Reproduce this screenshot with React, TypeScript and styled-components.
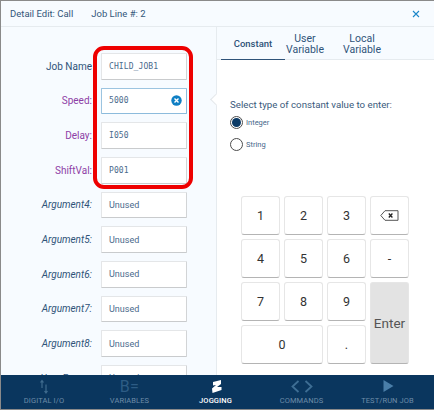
import React from "react";
import styled, { createGlobalStyle } from "styled-components";

const Global = createGlobalStyle`
  html, body { margin: 0; padding: 0; background: #8a8a8a; }
  * { box-sizing: border-box; }
`;

const Window = styled.div`
  width: 434px;
  height: 410px;
  padding: 1px 0 1px 1px;
  display: flex;
  flex-direction: column;
  font-family: Roboto, "Liberation Sans", sans-serif;
  background: #8a8a8a;
  overflow: hidden;
`;
const Header = styled.header`
  height: 26px;
  flex: none;
  display: flex;
  align-items: center;
  padding: 0 9px;
  gap: 18px;
  background: #f7fbff;
  border-bottom: 1px solid #e6ebef;
  font-size: 9.5px;
  color: #33567a;
`;
const HeaderSpacer = styled.div`
  flex: 1;
`;
const Close = styled.svg`
  width: 8px;
  height: 8px;
  margin-right: 5px;
`;
const Main = styled.main`
  flex: 1;
  min-height: 0;
  display: grid;
  grid-template-columns: 216px 1fr;
  overflow: hidden;
`;
const LeftPanel = styled.section`
  position: relative;
  background: #f7fbff;
  padding: 26px 0 0 0;
  overflow: hidden;
  display: flex;
  flex-direction: column;
  gap: 8px;
  border-right: 1px solid #e6ebef;
`;
const Row = styled.div`
  flex: none;
  display: grid;
  grid-template-columns: 91px 86px;
  column-gap: 9px;
  align-items: center;
  height: 26.67px;
`;
const Label = styled.label<{ $kind?: "normal" | "purple" | "arg" }>`
  text-align: right;
  font-size: 10px;
  color: ${(p) => (p.$kind === "purple" ? "#8e3ea6" : "#2f5379")};
  font-style: ${(p) => (p.$kind === "arg" ? "italic" : "normal")};
`;
const Field = styled.div<{ $active?: boolean; $mono?: boolean }>`
  height: 100%;
  background: #fff;
  display: flex;
  align-items: center;
  justify-content: space-between;
  padding: 0 4px 0 7px;
  border: 1px solid ${(p) => (p.$active ? "#9cc4e0" : "#e4e6e8")};
  border-bottom: 1.5px solid ${(p) => (p.$active ? "#8cbbdc" : "#c9cbcd")};
  border-right: 1.5px solid ${(p) => (p.$active ? "#8cbbdc" : "#d2d4d6")};
  border-radius: 1px;
  font-size: ${(p) => (p.$mono ? "8px" : "9px")};
  letter-spacing: ${(p) => (p.$mono ? "0.1px" : "0")};
  font-family: ${(p) =>
    p.$mono ? '"DejaVu Sans Mono", "Liberation Mono", monospace' : "Roboto, sans-serif"};
  color: #4a6a8c;
`;
const ClearIcon = styled.svg`
  width: 11px;
  height: 11px;
  flex: none;
`;
const Highlight = styled.div`
  position: absolute;
  left: 92px;
  top: 19px;
  width: 100px;
  height: 143px;
  border: 4px solid #ee0000;
  border-radius: 11px;
  pointer-events: none;
`;
const RightPanel = styled.section`
  position: relative;
  background: #fff;
  display: flex;
  flex-direction: column;
`;
const Tabs = styled.nav`
  flex: none;
  height: 33px;
  display: flex;
  align-items: stretch;
  padding-left: 4px;
  background: #f7fbff;
  border-bottom: 1px solid #e6ebef;
`;
const Tab = styled.div<{ $active?: boolean; $w: number }>`
  width: ${(p) => p.$w}px;
  display: flex;
  align-items: center;
  justify-content: center;
  text-align: center;
  line-height: 11px;
  font-size: ${(p) => (p.$active ? "9.5px" : "10.5px")};
  font-weight: ${(p) => (p.$active ? 500 : 400)};
  color: #2f5379;
  margin-bottom: -1px;
  border-bottom: ${(p) => (p.$active ? "1px solid #2f5379" : "none")};
`;
const Pointer = styled.div`
  position: absolute;
  left: -5px;
  top: 68px;
  width: 9px;
  height: 9px;
  background: #fff;
  transform: rotate(45deg);
  border-left: 1px solid #e2e6ea;
  border-bottom: 1px solid #e2e6ea;
`;
const Constant = styled.div`
  padding: 39px 0 0 13px;
  flex: 1;
  display: flex;
  flex-direction: column;
`;
const Prompt = styled.div`
  font-size: 9.7px;
  line-height: 11px;
  color: #3a5a7c;
`;
const RadioGroup = styled.div`
  margin-top: 6px;
  display: flex;
  flex-direction: column;
  gap: 9px;
`;
const RadioRow = styled.div`
  display: flex;
  align-items: center;
  gap: 3px;
  height: 13px;
  font-size: 7.5px;
  color: #46678a;
`;
const RadioDot = styled.span<{ $on?: boolean }>`
  width: 13px;
  height: 13px;
  border-radius: 50%;
  border: 1px solid #4c4c4c;
  display: flex;
  align-items: center;
  justify-content: center;
  background: #fff;
  &::after {
    content: "";
    width: 9px;
    height: 9px;
    border-radius: 50%;
    background: ${(p) => (p.$on ? "#0b3a66" : "transparent")};
  }
`;
const Keypad = styled.div`
  margin: 45px 0 0 11px;
  display: grid;
  grid-template-columns: repeat(4, 39px);
  grid-auto-rows: 39px;
  gap: 4px;
`;
const Key = styled.div<{ $wide?: boolean; $tall?: boolean; $enter?: boolean }>`
  grid-column: ${(p) => (p.$wide ? "span 2" : "auto")};
  grid-row: ${(p) => (p.$tall ? "span 2" : "auto")};
  display: flex;
  align-items: center;
  justify-content: center;
  background: ${(p) => (p.$enter ? "#e3e3e3" : "#fff")};
  border: 1px solid #e6e6e6;
  border-bottom: 1.5px solid #b4b4b4;
  border-radius: 3px;
  font-size: ${(p) => (p.$enter ? "13.5px" : "12.5px")};
  color: ${(p) => (p.$enter ? "#555" : "#333")};
`;
const Footer = styled.footer`
  flex: none;
  height: 34px;
  background: #0a365e;
  display: grid;
  grid-template-columns: 86px 85px 87px 85px 87px;
`;
const NavItem = styled.div<{ $active?: boolean }>`
  display: flex;
  flex-direction: column;
  align-items: center;
  justify-content: flex-start;
  padding-top: 4px;
  gap: 2px;
  color: ${(p) => (p.$active ? "#ffffff" : "#6d8ca8")};
  font-size: 7.5px;
  font-weight: ${(p) => (p.$active ? 500 : 400)};
  letter-spacing: 0.1px;
  white-space: nowrap;
`;
const NavIcon = styled.svg<{ $tone?: string }>`
  width: 24px;
  height: 15px;
  display: block;
  flex: none;
  color: ${(p) => p.$tone ?? "inherit"};
`;
const NavGlyph = styled.div`
  height: 15px;
  font-size: 16px;
  line-height: 16px;
  font-weight: 400;
  letter-spacing: 0.5px;
  color: #2d5c85;
`;

const args = ["Argument4:", "Argument5:", "Argument6:", "Argument7:", "Argument8:", "User Frame:"];
const keys = ["1", "2", "3"];

export default function App() {
  return (
    <Window>
      <Global />
      <Header>
        <span>Detail Edit: Call</span>
        <span>Job Line #: 2</span>
        <HeaderSpacer />
        <Close viewBox="0 0 8 8">
          <path d="M1 1l6 6M7 1L1 7" stroke="#1b87c9" strokeWidth="1.1" fill="none" />
        </Close>
      </Header>
      <Main>
        <LeftPanel>
          <Row>
            <Label>Job Name</Label>
            <Field $mono>CHILD_JOB1</Field>
          </Row>
          <Row>
            <Label $kind="purple">Speed:</Label>
            <Field $mono $active>
              5000
              <ClearIcon viewBox="0 0 11 11">
                <circle cx="5.5" cy="5.5" r="5.2" fill="#0f7fc4" />
                <path d="M3.5 3.5l4 4M7.5 3.5l-4 4" stroke="#fff" strokeWidth="1.4" />
              </ClearIcon>
            </Field>
          </Row>
          <Row>
            <Label $kind="purple">Delay:</Label>
            <Field $mono>I050</Field>
          </Row>
          <Row>
            <Label $kind="purple">ShiftVal:</Label>
            <Field $mono>P001</Field>
          </Row>
          {args.map((a) => (
            <Row key={a}>
              <Label $kind="arg">{a}</Label>
              <Field>Unused</Field>
            </Row>
          ))}
          <Highlight />
        </LeftPanel>
        <RightPanel>
          <Tabs>
            <Tab $active $w={64}>Constant</Tab>
            <Tab $w={40}>User<br />Variable</Tab>
            <Tab $w={74}>Local<br />Variable</Tab>
          </Tabs>
          <Pointer />
          <Constant>
            <Prompt>Select type of constant value to enter:</Prompt>
            <RadioGroup>
              <RadioRow><RadioDot $on />Integer</RadioRow>
              <RadioRow><RadioDot />String</RadioRow>
            </RadioGroup>
            <Keypad>
              {keys.map((k) => <Key key={k}>{k}</Key>)}
              <Key>
                <svg width="19" height="11" viewBox="0 0 19 11">
                  <path d="M5 .7h13v9.600H5L.8 5.500z" fill="none" stroke="#555" strokeWidth="1" />
                  <path d="M8.800 3.500l3.600 4M12.400 3.500l-3.600 4" stroke="#222" strokeWidth="1.300" />
                </svg>
              </Key>
              <Key>4</Key><Key>5</Key><Key>6</Key><Key>-</Key>
              <Key>7</Key><Key>8</Key><Key>9</Key>
              <Key $tall $enter>Enter</Key>
              <Key $wide>0</Key><Key>.</Key>
            </Keypad>
          </Constant>
        </RightPanel>
      </Main>
      <Footer>
        <NavItem>
          <NavIcon viewBox="0 0 24 15" $tone="#3f6b8e">
            <path d="M10 9V1.500M8.500 3.500L10 1.500l1.500 2M14 5.500V14M12.500 12l1.500 2 1.500-2" stroke="currentColor" strokeWidth="1.200" fill="none" />
          </NavIcon>
          DIGITAL I/O
        </NavItem>
        <NavItem>
          <NavGlyph>B=</NavGlyph>
          VARIABLES
        </NavItem>
        <NavItem $active>
          <NavIcon viewBox="0 0 24 15">
            <path d="M9 3l8-2v4l-4 3h4.500v3L8.500 14 8 9.500 12 6l-3 .5z" fill="currentColor" />
          </NavIcon>
          JOGGING
        </NavItem>
        <NavItem>
          <NavIcon viewBox="0 0 24 15" $tone="#3e6e94">
            <path d="M8.500 2L2.500 7.500 8.500 13M15.500 2l6 5.500-6 5.500" stroke="currentColor" strokeWidth="1.800" fill="none" />
          </NavIcon>
          COMMANDS
        </NavItem>
        <NavItem>
          <NavIcon viewBox="0 0 24 15" $tone="#4a7ea8">
            <path d="M7.500 1v12l10-6z" fill="currentColor" />
          </NavIcon>
          TEST/RUN JOB
        </NavItem>
      </Footer>
    </Window>
  );
}
